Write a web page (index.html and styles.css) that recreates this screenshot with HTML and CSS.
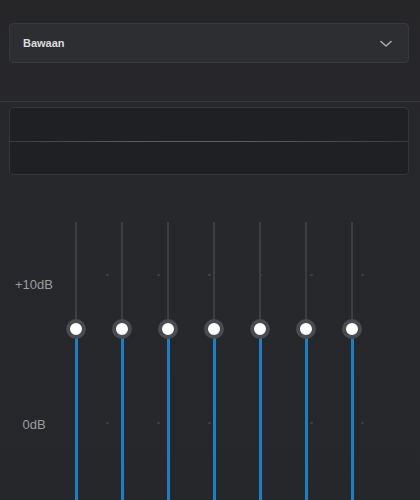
FILE: index.html
```html
<!DOCTYPE html>
<html>
<head>
<meta charset="utf-8">
<link rel="stylesheet" href="styles.css">
</head>
<body>
<div class="page">
  <div class="top">
    <div class="select">
      <span class="select-label">Bawaan</span>
      <svg class="chev" width="12" height="8" viewBox="0 0 12 8"><path d="M1 1.5 L6 6 L11 1.5" fill="none" stroke="#a9aaae" stroke-width="1.6" stroke-linecap="round" stroke-linejoin="round"/></svg>
    </div>
  </div>
  <div class="divider"></div>
  <div class="boxwrap">
    <div class="box"><div class="midline"></div></div>
  </div>
  <div class="eq">
    <div class="labels">
      <span class="lbl lbl-top">+10dB</span>
      <span class="lbl lbl-mid">0dB</span>
    </div>
    <div class="sliders">
      <div class="slider"><div class="track"></div><div class="knob"></div><div class="fill"></div></div>
      <div class="slider"><div class="track"></div><div class="knob"></div><div class="fill"></div></div>
      <div class="slider"><div class="track"></div><div class="knob"></div><div class="fill"></div></div>
      <div class="slider"><div class="track"></div><div class="knob"></div><div class="fill"></div></div>
      <div class="slider"><div class="track"></div><div class="knob"></div><div class="fill"></div></div>
      <div class="slider"><div class="track"></div><div class="knob"></div><div class="fill"></div></div>
      <div class="slider"><div class="track"></div><div class="knob"></div><div class="fill"></div></div>
    </div>
  </div>
</div>
</body>
</html>
```

FILE: styles.css
```css
html, body {
  margin: 0;
  padding: 0;
  height: 100%;
  overflow: hidden;
}
body {
  background: linear-gradient(180deg, #262629 0%, #27282c 40%, #26272b 100%);
  font-family: "Liberation Sans", Arial, sans-serif;
}
.page {
  width: 420px;
  height: 500px;
  display: flex;
  flex-direction: column;
}
.top {
  padding: 23px 11px 0 9px;
}
.select {
  height: 38px;
  border: 1px solid #38393e;
  border-radius: 4px;
  background: #2d2e32;
  display: flex;
  align-items: center;
  justify-content: space-between;
  padding: 0 16px 0 13px;
}
.select-label {
  color: #dcdcde;
  font-size: 11px;
  font-weight: bold;
}
.chev {
  display: block;
  margin-top: 1px;
}
.divider {
  margin-top: 38px;
  height: 1px;
  background: #36373b;
}
.boxwrap {
  padding: 5px 11px 0 9px;
}
.box {
  height: 66px;
  border: 1px solid #36373b;
  border-radius: 4px;
  background: #1f2023;
  display: flex;
  align-items: center;
}
.midline {
  flex: 1;
  height: 1px;
  background: linear-gradient(90deg, #3a3b3f 0%, #5a5b60 30%, #5f6065 55%, #4a4b50 80%, #3a3b3f 100%);
}
.eq {
  margin-top: 47px;
  display: flex;
  flex: 1;
}
.labels {
  width: 53px;
  flex: none;
  display: flex;
  flex-direction: column;
  align-items: center;
  padding-left: 15px;
  box-sizing: border-box;
}
.lbl {
  color: #9b9ca0;
  font-size: 13px;
  line-height: 15px;
  white-space: nowrap;
}
.lbl-top { margin-top: 55px; }
.lbl-mid { margin-top: 125px; }
.sliders {
  display: flex;
  flex: 1;
  position: relative;
}
.sliders::before {
  content: "";
  position: absolute;
  left: 29px;
  top: 0;
  width: 306px;
  height: 100%;
  background-image: radial-gradient(circle, #3b3c41 0 1.1px, transparent 1.6px);
  background-size: 51px 148px;
  background-position: 0 -21px;
}
.slider {
  width: 46px;
  display: flex;
  flex-direction: column;
  align-items: center;
  position: relative;
}
.track {
  width: 2px;
  height: 98px;
  background: #3d3e43;
}
.knob {
  width: 12px;
  height: 12px;
  border-radius: 50%;
  background: #ffffff;
  border: 4px solid #4a4b50;
  flex: none;
  margin: -1px 0;
  position: relative;
  z-index: 1;
}
.fill {
  width: 3px;
  flex: 1;
  background: #1d7fc2;
}
```
